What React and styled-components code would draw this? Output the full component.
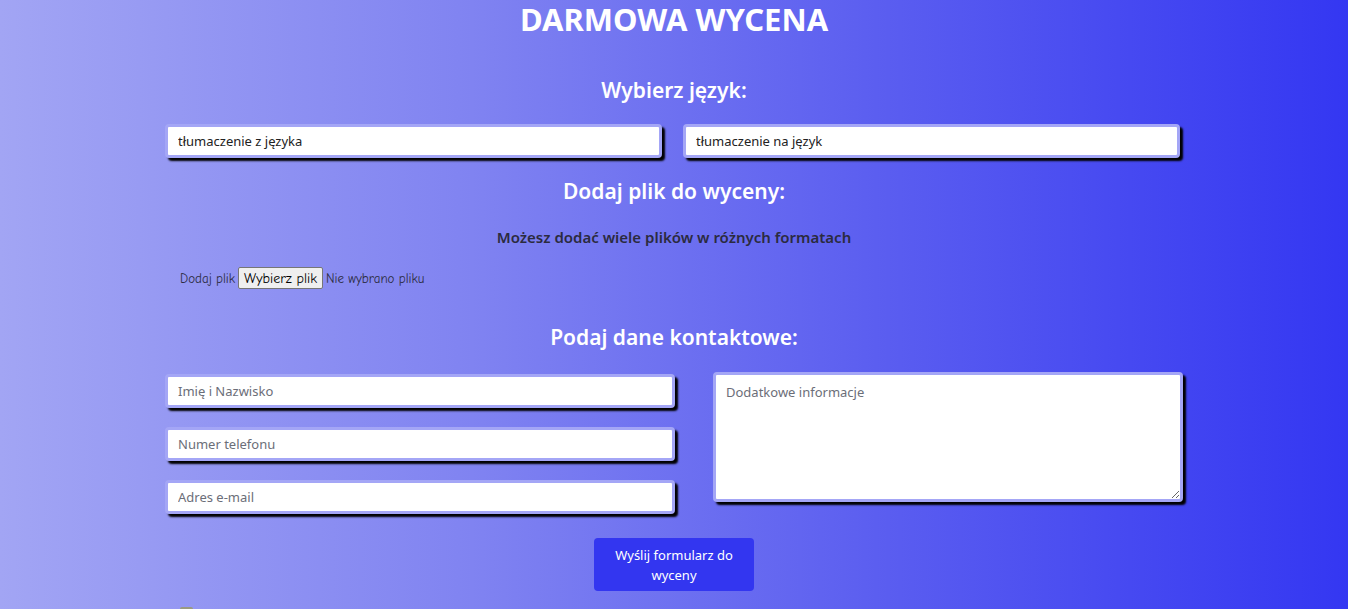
import styled, { createGlobalStyle } from 'styled-components'

const Global = createGlobalStyle`
  html, body { margin: 0; padding: 0; }
  body {
    font-family: "Noto Sans", "Open Sans", Arial, sans-serif;
    background: #8083f1;
    overflow: hidden;
  }
`

const Page = styled.div`
  width: 1348px;
  min-height: 640px;
  background: linear-gradient(90deg, #a2a5f4 0%, #8083f1 35%, #5b5ef0 65%, #3437f2 100%);
  border-right: 2px solid #fff;
`

const Wrap = styled.form`
  width: 1018px;
  margin: 0 auto;
  display: flex;
  flex-direction: column;
  align-items: stretch;
`

const Title = styled.h1`
  margin: 0;
  height: 38px;
  line-height: 38px;
  text-align: center;
  color: #fff;
  font-size: 31px;
  font-weight: 700;
`

const Heading = styled.h2`
  margin: ${p => p.$top}px 0 0;
  text-align: center;
  color: #fff;
  font-size: 21px;
  font-weight: 600;
  line-height: 28px;
`

const Note = styled.p`
  margin: 22px 0 0;
  text-align: center;
  color: #2b2b3f;
  font-size: 15px;
  font-weight: 600;
  line-height: 20px;
`

const Pair = styled.div`
  display: grid;
  grid-template-columns: 497px 497px;
  gap: 21px;
  margin-top: ${p => p.$top}px;
`

const Field = styled.input`
  box-sizing: border-box;
  width: 100%;
  height: 34px;
  border: 3px solid #a4a6f6;
  border-radius: 4px;
  box-shadow: 3px 3px 2px #000;
  background: #fff;
  padding: 0 10px;
  font-family: inherit;
  font-size: 13px;
  color: #222;
  outline: none;
  &::placeholder { color: #6b6e78; }
`

const FileRow = styled.div`
  display: flex;
  align-items: center;
  gap: 3px;
  margin: 20px 0 0 15px;
  font-family: "Comic Neue", "DejaVu Sans", sans-serif;
  font-size: 13px;
  color: #2b2b3f;
`

const FileButton = styled.button`
  font-family: inherit;
  font-size: 14px;
  height: 22px;
  padding: 0 5px;
  border: 1px solid #767676;
  border-radius: 2px;
  background: #efefef;
  color: #000;
`

const Contact = styled.div`
  display: grid;
  grid-template-columns: 510px 470px;
  gap: 38px;
  margin-top: 21px;
`

const Column = styled.div`
  display: flex;
  flex-direction: column;
  gap: 19px;
  padding-top: 2px;
`

const Area = styled.textarea`
  box-sizing: border-box;
  width: 100%;
  height: 130px;
  border: 3px solid #a4a6f6;
  border-radius: 4px;
  box-shadow: 3px 3px 2px #000;
  background: #fff;
  padding: 8px 10px;
  font-family: inherit;
  font-size: 13px;
  outline: none;
  resize: vertical;
  &::placeholder { color: #6b6e78; }
`

const Submit = styled.button`
  align-self: center;
  margin-top: 24px;
  width: 160px;
  height: 53px;
  border: none;
  border-radius: 4px;
  background: #3336f0;
  color: #fff;
  font-family: inherit;
  font-size: 13px;
  line-height: 20px;
  padding: 0 12px;
`

const Check = styled.div`
  margin: 16px 0 0 15px;
  width: 13px;
  height: 13px;
  border-radius: 2px;
  background: #9a9a80;
`

export default function App() {
  return (
    <Page>
      <Global />
      <Wrap onSubmit={e => e.preventDefault()}>
        <Title>DARMOWA WYCENA</Title>
        <Heading $top={38}>Wybierz język:</Heading>
        <Pair $top={20}>
          <Field defaultValue="tłumaczenie z języka" />
          <Field defaultValue="tłumaczenie na język" />
        </Pair>
        <Heading $top={19}>Dodaj plik do wyceny:</Heading>
        <Note>Możesz dodać wiele plików w różnych formatach</Note>
        <FileRow>
          <span>Dodaj plik</span>
          <FileButton type="button">Wybierz plik</FileButton>
          <span>Nie wybrano pliku</span>
        </FileRow>
        <Heading $top={34}>Podaj dane kontaktowe:</Heading>
        <Contact>
          <Column>
            <Field placeholder="Imię i Nazwisko" />
            <Field placeholder="Numer telefonu" />
            <Field placeholder="Adres e-mail" />
          </Column>
          <Area placeholder="Dodatkowe informacje" />
        </Contact>
        <Submit type="submit">Wyślij formularz do wyceny</Submit>
        <Check />
      </Wrap>
    </Page>
  )
}
